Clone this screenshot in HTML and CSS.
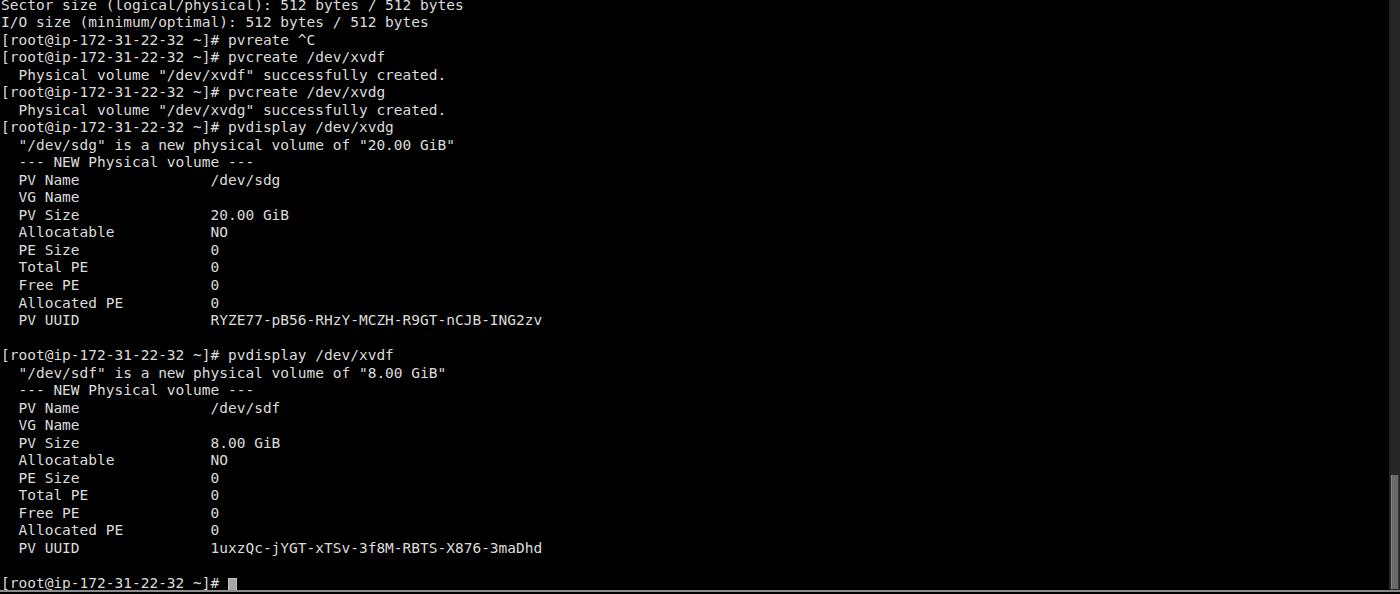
FILE: index.html
```html
<!DOCTYPE html>
<html>
<head>
<meta charset="utf-8">
<link rel="stylesheet" href="styles.css">
</head>
<body>
<div class="window">
  <div class="main">
    <div class="term">
<pre class="out">Sector size (logical/physical): 512 bytes / 512 bytes
I/O size (minimum/optimal): 512 bytes / 512 bytes
[root@ip-172-31-22-32 ~]# pvreate ^C
[root@ip-172-31-22-32 ~]# pvcreate /dev/xvdf
  Physical volume "/dev/xvdf" successfully created.
[root@ip-172-31-22-32 ~]# pvcreate /dev/xvdg
  Physical volume "/dev/xvdg" successfully created.
[root@ip-172-31-22-32 ~]# pvdisplay /dev/xvdg
  "/dev/sdg" is a new physical volume of "20.00 GiB"
  --- NEW Physical volume ---
  PV Name               /dev/sdg
  VG Name
  PV Size               20.00 GiB
  Allocatable           NO
  PE Size               0
  Total PE              0
  Free PE               0
  Allocated PE          0
  PV UUID               RYZE77-pB56-RHzY-MCZH-R9GT-nCJB-ING2zv

[root@ip-172-31-22-32 ~]# pvdisplay /dev/xvdf
  "/dev/sdf" is a new physical volume of "8.00 GiB"
  --- NEW Physical volume ---
  PV Name               /dev/sdf
  VG Name
  PV Size               8.00 GiB
  Allocatable           NO
  PE Size               0
  Total PE              0
  Free PE               0
  Allocated PE          0
  PV UUID               1uxzQc-jYGT-xTSv-3f8M-RBTS-X876-3maDhd

[root@ip-172-31-22-32 ~]# <span class="cursor"> </span></pre>
    </div>
    <div class="scrollbar"><div class="thumb"></div></div>
  </div>
  <div class="edge"></div>
</div>
</body>
</html>
```

FILE: styles.css
```css
html, body {
  margin: 0;
  padding: 0;
  background: #000;
  overflow: hidden;
}
.window {
  width: 1400px;
  height: 594px;
  display: flex;
  flex-direction: column;
  background: #000;
}
.main {
  flex: 1;
  display: flex;
  min-height: 0;
}
.term {
  flex: 1;
  overflow: hidden;
  padding-left: 1px;
}
.out {
  margin: -3.5px 0 0 0;
  font-family: "DejaVu Sans Mono", monospace;
  font-size: 14.5px;
  line-height: 17.53px;
  color: #dcdcdc;
  white-space: pre;
}
.cursor {
  display: inline-block;
  box-sizing: border-box;
  width: 9px;
  height: 17px;
  vertical-align: -4px;
  background: #a6a6a6;
  border: 1px solid #c4c4c4;
}
.scrollbar {
  width: 11px;
  background: #262626;
  display: flex;
  flex-direction: column;
  justify-content: flex-end;
  align-items: center;
  padding-bottom: 1px;
}
.thumb {
  width: 8px;
  height: 114px;
  background: #6a6a6a;
  border-left: 1px solid #8a8a8a;
  border-right: 1px solid #3a3a3a;
  box-sizing: border-box;
}
.edge {
  height: 2px;
  background: #8c8c8c;
  margin-bottom: 2px;
}
```
